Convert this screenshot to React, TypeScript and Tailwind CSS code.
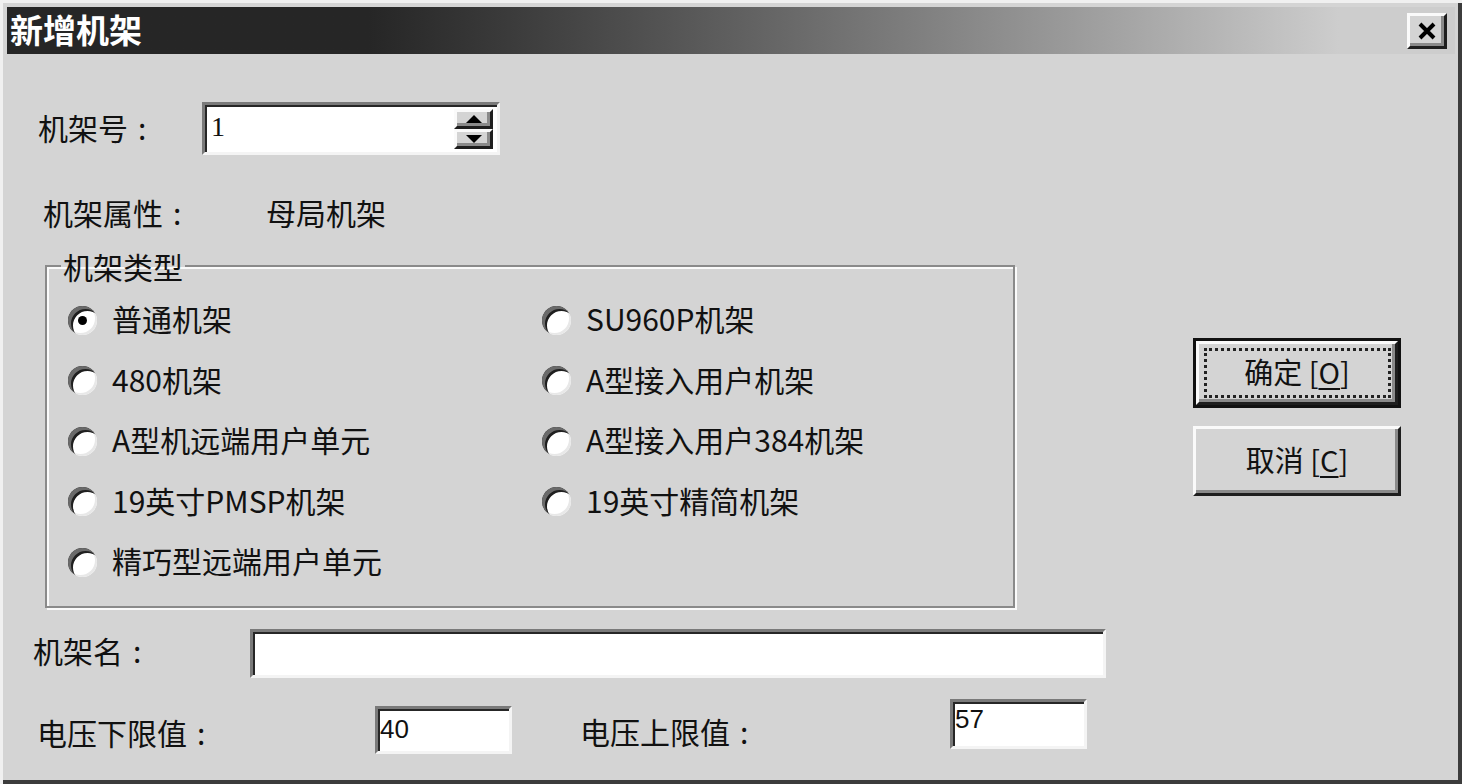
import React from "react";

const cjk = "font-['Noto_Sans_CJK_SC',sans-serif]";
const sunken =
  "bg-white border-[3px] border-t-[#7a7a7a] border-l-[#7a7a7a] border-r-[#f4f4f4] border-b-[#f4f4f4] shadow-[inset_2px_2px_0_#262626]";
const raised =
  "bg-[#d4d4d4] border-[3px] border-t-[#fafafa] border-l-[#fafafa] border-r-[#1e1e1e] border-b-[#1e1e1e] shadow-[inset_-3px_-3px_0_#8a8a8a]";

const Radio = ({ label, checked }: { label: string; checked?: boolean }) => (
  <div className="flex items-center">
    <div className="flex h-[29px] w-[29px] items-center justify-center rounded-full bg-white shadow-[inset_3px_3px_0_#6a6a6a,inset_5px_5px_0_#1f1f1f,inset_-2px_-2px_0_#e8e8e8]">
      {checked && <div className="h-[9px] w-[9px] rounded-full bg-black" />}
    </div>
    <span className="ml-[15px] -mt-[4px] text-[30px] leading-[40px]">{label}</span>
  </div>
);

const Button = ({ text, hot, focused }: { text: string; hot: string; focused?: boolean }) => {
  const inner = (
    <div className={`${raised} flex h-full w-full items-center justify-center`}>
      <div
        className={`flex h-[50px] w-[187px] items-center justify-center ${
          focused ? "border-[3px] border-dotted border-[#222]" : ""
        }`}
      >
        <span className="-mt-[4px] text-[29px] leading-none">
          {text} [<span className="underline underline-offset-4">{hot}</span>]
        </span>
      </div>
    </div>
  );
  return focused ? (
    <div className="h-[70px] w-[208px] border-[3px] border-[#111]">{inner}</div>
  ) : (
    <div className="h-[70px] w-[208px]">{inner}</div>
  );
};

const Colon = () => <span className="ml-[10px]">:</span>;

export default function App() {
  return (
    <div
      className={`${cjk} flex h-[784px] w-[1462px] flex-col bg-[#d4d4d4] p-[7px] text-[#111] shadow-[inset_3px_3px_0_#f0f0f0,inset_-4px_-4px_0_#3c3c3c]`}
    >
      {/* title bar */}
      <div className="flex h-[47px] shrink-0 items-start justify-between bg-linear-to-r from-[#262626] from-[25%] to-[#cdcdcd] to-[92%]">
        <span className="ml-[3px] mt-[4px] text-[33px] font-bold leading-[36px] text-white">新增机架</span>
        <div className={`${raised} mr-[8px] mt-[6px] flex h-[36px] w-[40px] items-center justify-center`}>
          <svg width="20" height="18" viewBox="0 0 20 18">
            <path d="M3 2 L17 16 M17 2 L3 16" stroke="#000" strokeWidth="4" />
          </svg>
        </div>
      </div>

      {/* body */}
      <div className="flex flex-1">
        <div className="ml-[26px] flex w-[1080px] flex-col">
          {/* 机架号 */}
          <div className="mt-[48px] flex h-[53px] items-center">
            <span className="ml-[5px] -mt-[4px] w-[164px] text-[30px] leading-[40px]">
              机架号<Colon />
            </span>
            <div className={`${sunken} flex h-[53px] w-[298px] items-center justify-between`}>
              <span className="ml-[6px] -mt-[4px] font-['Liberation_Serif',serif] text-[28px]">1</span>
              <div className="mr-[4px] flex h-[40px] w-[39px] flex-col">
                <div className={`${raised} flex flex-1 items-center justify-center border-[2px]`}>
                  <svg width="16" height="8" viewBox="0 0 16 8">
                    <path d="M8 0 L16 8 L0 8 Z" fill="#000" />
                  </svg>
                </div>
                <div className={`${raised} flex flex-1 items-center justify-center border-[2px]`}>
                  <svg width="16" height="8" viewBox="0 0 16 8">
                    <path d="M0 0 L16 0 L8 8 Z" fill="#000" />
                  </svg>
                </div>
              </div>
            </div>
          </div>

          {/* 机架属性 */}
          <div className="mt-[37px] flex h-[40px] items-center">
            <span className="ml-[10px] w-[223px] text-[30px] leading-[40px]">
              机架属性<Colon />
            </span>
            <span className="text-[30px] leading-[40px]">母局机架</span>
          </div>

          {/* 机架类型 */}
          <fieldset className="ml-[12px] mt-[17px] w-[970px] border-2 border-[#8a8a8a] pb-[13px] pt-[7px] shadow-[inset_2px_2px_0_#fafafa,2px_2px_0_#fafafa]">
            <legend className="ml-[14px] px-[2px] text-[30px] leading-[34px]">机架类型</legend>
            <div className="grid grid-cols-[474px_1fr] auto-rows-[60.5px] items-center pl-[21px]">
              <Radio label="普通机架" checked />
              <Radio label="SU960P机架" />
              <Radio label="480机架" />
              <Radio label="A型接入用户机架" />
              <Radio label="A型机远端用户单元" />
              <Radio label="A型接入用户384机架" />
              <Radio label="19英寸PMSP机架" />
              <Radio label="19英寸精简机架" />
              <Radio label="精巧型远端用户单元" />
            </div>
          </fieldset>

          {/* 机架名 */}
          <div className="mt-[21px] flex h-[49px] items-center">
            <span className="-mt-[6px] w-[217px] text-[30px] leading-[40px]">
              机架名<Colon />
            </span>
            <div className={`${sunken} h-[49px] w-[856px]`} />
          </div>

          {/* 电压 */}
          <div className="mt-[21px] flex h-[57px] items-start">
            <span className="ml-[4px] mt-[13px] w-[338px] text-[30px] leading-[40px]">
              电压下限值<Colon />
            </span>
            <div className={`${sunken} mt-[7px] flex h-[48px] w-[137px] items-center`}>
              <span className="ml-[2px] font-['Liberation_Sans',sans-serif] text-[26px]">40</span>
            </div>
            <span className="ml-[68px] mt-[12px] w-[370px] text-[30px] leading-[40px]">
              电压上限值<Colon />
            </span>
            <div className={`${sunken} flex h-[50px] w-[137px] items-start`}>
              <span className="ml-[2px] mt-[2px] font-['Liberation_Sans',sans-serif] text-[26px] leading-[30px]">57</span>
            </div>
          </div>
        </div>

        {/* buttons */}
        <div className="ml-[80px] mt-[284px] flex flex-col gap-[18px]">
          <Button text="确定" hot="O" focused />
          <Button text="取消" hot="C" />
        </div>
      </div>
    </div>
  );
}
